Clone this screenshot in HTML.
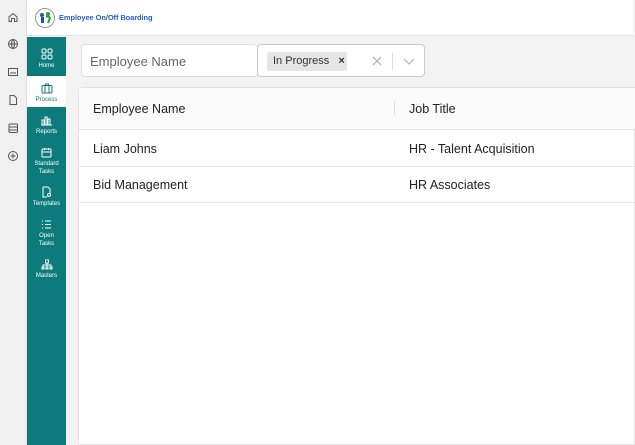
<!DOCTYPE html>
<html><head><meta charset="utf-8"><style>
*{box-sizing:border-box;margin:0;padding:0}
body{width:635px;height:445px;overflow:hidden;background:#f3f3f3;font-family:"Liberation Sans",Arial,sans-serif;position:relative}
.strip{position:absolute;left:0;top:0;width:27px;height:445px;background:#f0f0f0;border-right:1px solid #e0e0e0}
.strip svg{position:absolute;left:7px}
.hdr{position:absolute;left:27px;top:0;width:606px;height:36px;background:#fff;border-bottom:1px solid #e2e2e2}
.logo{position:absolute;left:8px;top:8px;width:20px;height:20px;border-radius:50%;border:1px solid #999;background:#fff}
.title{position:absolute;left:32px;top:13px;font-size:7.5px;color:#2a62b8;font-weight:bold;letter-spacing:-0.1px}
.side{position:absolute;left:27px;top:37px;width:39px;height:408px;background:#0d7b7b}
.it{position:absolute;left:0;width:39px;text-align:center;color:#fff;font-size:6px;line-height:8px}
.it svg{display:block;margin:0 auto 2px}
.act{background:#fff;color:#0d7b7b}
.inp{position:absolute;left:81px;top:44px;width:177px;height:33px;background:#fff;border:1px solid #ddd;border-radius:4px;font-size:13px;color:#666;padding:9px 0 0 8px}
.sel{position:absolute;left:257px;top:44px;width:168px;height:33px;background:#fff;border:1px solid #ccc;border-radius:4px}
.chip{position:absolute;left:9px;top:7px;width:80px;height:19px;background:#e6e6e6;border-radius:2px;font-size:11px;color:#333;padding:3px 0 0 6px}
.card{position:absolute;left:78px;top:87px;width:557px;height:358px;background:#fff;border:1px solid #e3e3e3;border-radius:5px 0 0 0}
.row{position:absolute;left:0;width:557px;border-bottom:1px solid #e3e3e3;font-size:12.5px;color:#222}
.row span{position:absolute}
</style></head><body>
<div class="strip">
<svg style="top:11px" width="12" height="12" viewBox="0 0 12 12" fill="none" stroke="#555" stroke-width="1"><path d="M2 6L6 2.5L10 6V10.5H7.5V7.5H4.5V10.5H2Z"/></svg>
<svg style="top:38px" width="12" height="12" viewBox="0 0 12 12" fill="none" stroke="#555"><circle cx="6" cy="6" r="4.5"/><path d="M1.5 6H10.5M6 1.5C4 4 4 8 6 10.5M6 1.5C8 4 8 8 6 10.5"/></svg>
<svg style="top:66px" width="12" height="12" viewBox="0 0 12 12" fill="none" stroke="#555"><rect x="1.5" y="2.5" width="9" height="7"/><path d="M3 7H9"/></svg>
<svg style="top:94px" width="12" height="12" viewBox="0 0 12 12" fill="none" stroke="#555"><path d="M3 1.5H7L9.5 4V10.5H3Z"/></svg>
<svg style="top:122px" width="12" height="12" viewBox="0 0 12 12" fill="none" stroke="#555"><rect x="2" y="2" width="8.5" height="8.5" rx="1"/><path d="M2 5H10.5M2 8H10.5"/></svg>
<svg style="top:150px" width="12" height="12" viewBox="0 0 12 12" fill="none" stroke="#555"><circle cx="6" cy="6" r="4.5"/><path d="M6 3.5V8.5M3.5 6H8.5"/></svg>
</div>
<div class="hdr"><div class="logo"><svg width="18" height="18" viewBox="0 0 18 18"><circle cx="6" cy="6" r="2" fill="#1c55b0"/><rect x="5" y="8" width="3" height="6" fill="#1c55b0"/><circle cx="12" cy="5" r="2" fill="#3a9a2a"/><path d="M10 8L12 7L14 9L12 14" stroke="#3a9a2a" stroke-width="2" fill="none"/></svg></div><div class="title">Employee On/Off Boarding</div></div>
<div class="side">
<div class="it" style="top:11px"><svg width="12" height="12" viewBox="0 0 12 12" fill="none" stroke="#fff"><rect x="1" y="1" width="4" height="4" rx="1.2"/><rect x="7" y="1" width="4" height="4" rx="1.2"/><rect x="1" y="7" width="4" height="4" rx="1.2"/><rect x="7" y="7" width="4" height="4" rx="1.2"/></svg>Home</div>
<div class="it act" style="top:39px;height:31px;padding-top:7px"><svg width="12" height="11" viewBox="0 0 12 11" fill="none" stroke="#0d7b7b"><rect x="1" y="2.5" width="10" height="7.5" rx="1"/><path d="M4 2.5V10M8 2.5V10M4.5 2.5V1H7.5V2.5"/></svg>Process</div>
<div class="it" style="top:78px"><svg width="13" height="11" viewBox="0 0 13 11" fill="none" stroke="#fff"><path d="M1 10H12M2 10V5H4V10M5 10V2H7V10M8 10V4H10V10"/></svg>Reports</div>
<div class="it" style="top:110px"><svg width="11" height="11" viewBox="0 0 11 11" fill="none" stroke="#fff"><rect x="1" y="2" width="9" height="8" rx="1"/><path d="M1 5H10M3.5 1V3M7.5 1V3"/></svg>Standard<br>Tasks</div>
<div class="it" style="top:149px"><svg width="11" height="12" viewBox="0 0 11 12" fill="none" stroke="#fff"><path d="M2 1H7L9 3V8M2 1V11H6"/><circle cx="8" cy="9" r="1.5"/></svg>Templates</div>
<div class="it" style="top:182px"><svg width="11" height="11" viewBox="0 0 11 11" fill="none" stroke="#fff"><path d="M4 2H10M4 5.5H10M4 9H10M1 2H2M1 5.5H2M1 9H2"/></svg>Open<br>Tasks</div>
<div class="it" style="top:222px"><svg width="12" height="11" viewBox="0 0 12 11" fill="none" stroke="#fff"><rect x="4.5" y="1" width="3" height="3"/><path d="M6 4V6M2 8V6H10V8M6 6V8"/><rect x="1" y="8" width="2" height="2"/><rect x="5" y="8" width="2" height="2"/><rect x="9" y="8" width="2" height="2"/></svg>Masters</div>
</div>
<div class="inp">Employee Name</div>
<div class="sel"><div class="chip">In Progress <b style="margin-left:6px;font-size:11px">×</b></div>
<svg style="position:absolute;left:114px;top:11px" width="10" height="10" viewBox="0 0 10 10" stroke="#bbb" stroke-width="1.5"><path d="M1 1L9 9M9 1L1 9"/></svg>
<div style="position:absolute;left:134px;top:8px;width:1px;height:17px;background:#ddd"></div>
<svg style="position:absolute;left:145px;top:13px" width="12" height="7" viewBox="0 0 12 7" fill="none" stroke="#bbb" stroke-width="1.3"><path d="M1 1L6 6L11 1"/></svg>
</div>
<div class="card">
<div class="row" style="top:0;height:42px;background:#fafafa"><span style="left:14px;top:14px">Employee Name</span><span style="left:315px;top:13px;width:1px;height:14px;background:#ddd"></span><span style="left:330px;top:14px">Job Title</span></div>
<div class="row" style="top:42px;height:37px"><span style="left:14px;top:12px">Liam Johns</span><span style="left:330px;top:12px">HR - Talent Acquisition</span></div>
<div class="row" style="top:79px;height:36px"><span style="left:14px;top:11px">Bid Management</span><span style="left:330px;top:11px">HR Associates</span></div>
</div>
</body></html>
